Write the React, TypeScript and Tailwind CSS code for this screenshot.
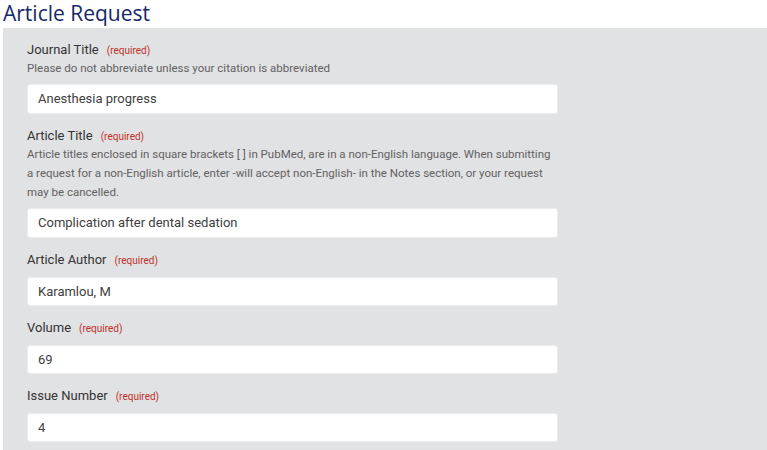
import React from "react";

function Field({ label, help, value, first }: { label: string; help?: React.ReactNode; value: string; first?: boolean }) {
  return (
    <div className={first ? "" : "mt-[14px]"}>
      <div className="flex items-baseline h-4 leading-4">
        <span className="text-[13px] text-[#333333]">{label}</span>
        <span className="ml-2 text-[10px] text-[#c0302a]">(required)</span>
      </div>
      {help && <div className="mt-[1px] text-[11.5px] leading-[19px] text-[#616161] w-[532px]">{help}</div>}
      <div className={`${help ? "mt-[6px] h-[30px]" : "mt-[9px] h-[29px]"} w-[531px] bg-white rounded-[3px] border border-[#ececec] flex items-center px-[10px] text-[13px] text-[#404040]`}>
        {value}
      </div>
    </div>
  );
}

export default function App() {
  return (
    <div className="w-[767px] h-[450px] overflow-hidden bg-white" style={{ fontFamily: "Roboto, 'Noto Sans', sans-serif" }}>
      <h1 className="h-[28px] leading-[26px] pl-[3px] text-[21px] text-[#16286a]" style={{ fontFamily: "'Open Sans', sans-serif" }}>
        Article Request
      </h1>
      <div className="ml-[3px] bg-[#e1e2e4] h-[422px] pl-[24px] pt-[14px]">
        <Field first label="Journal Title" help="Please do not abbreviate unless your citation is abbreviated" value="Anesthesia progress" />
        <Field
          label="Article Title"
          help="Article titles enclosed in square brackets [ ] in PubMed, are in a non-English language. When submitting a request for a non-English article, enter -will accept non-English- in the Notes section, or your request may be cancelled."
          value="Complication after dental sedation"
        />
        <Field label="Article Author" value="Karamlou, M" />
        <Field label="Volume" value="69" />
        <Field label="Issue Number" value="4" />
      </div>
    </div>
  );
}
